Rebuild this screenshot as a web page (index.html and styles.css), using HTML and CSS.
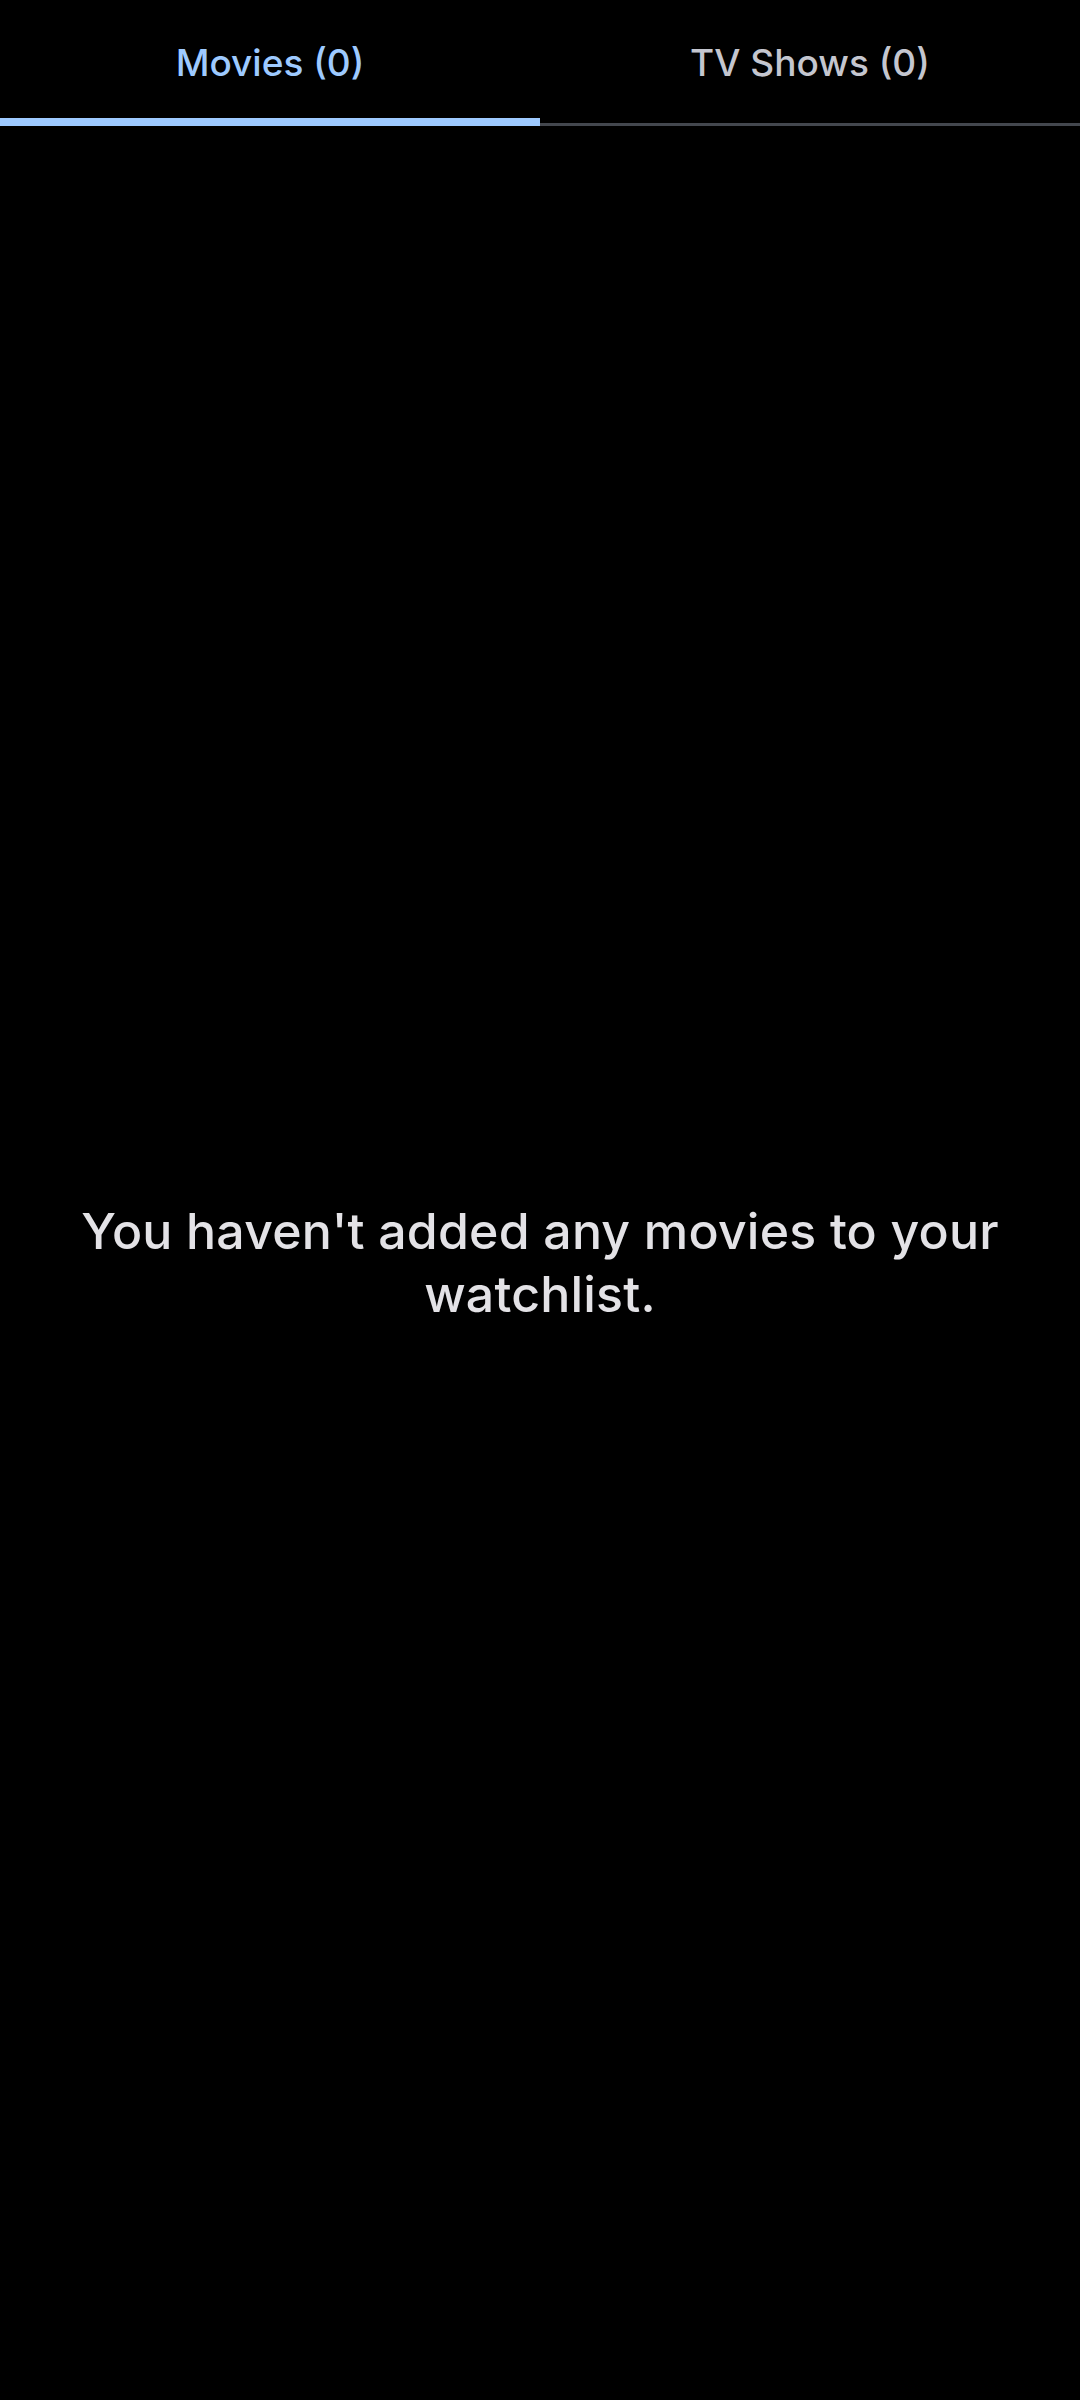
FILE: index.html
```html
<!DOCTYPE html>
<html>
<head>
<meta charset="utf-8">
<link rel="stylesheet" href="styles.css">
</head>
<body>
<div class="app">
  <div class="tabs">
    <div class="tab active"><span class="label">Movies (0)</span><span class="indicator"></span></div>
    <div class="tab"><span class="label">TV Shows (0)</span></div>
  </div>
  <div class="content">
    <p class="empty">You haven't added any movies to your watchlist.</p>
  </div>
</div>
</body>
</html>
```
FILE: styles.css
```css
html, body {
  margin: 0;
  padding: 0;
  background: #000;
}
body {
  font-family: Inter, "Open Sans", sans-serif;
}
.app {
  width: 1080px;
  height: 2400px;
  display: flex;
  flex-direction: column;
}
.tabs {
  display: flex;
  height: 126px;
  border-bottom: 3px solid #43474e;
  box-sizing: border-box;
}
.tab {
  flex: 1;
  position: relative;
  display: flex;
  align-items: center;
  justify-content: center;
  padding-top: 2px;
  box-sizing: border-box;
}
.label {
  font-size: 37px;
  font-weight: 500;
  color: #c4c6cf;
  letter-spacing: 0;
}
.tab.active .label {
  color: #9ecaff;
}
.indicator {
  position: absolute;
  left: 0;
  right: 0;
  bottom: -3px;
  height: 8px;
  background: #9ecaff;
}
.content {
  flex: 1;
  display: flex;
  align-items: center;
  justify-content: center;
  padding: 0 60px;
}
.empty {
  margin: 0;
  text-align: center;
  font-size: 50px;
  line-height: 63px;
  font-weight: 500;
  color: #e3e2e6;
  letter-spacing: 0.2px;
}
```
